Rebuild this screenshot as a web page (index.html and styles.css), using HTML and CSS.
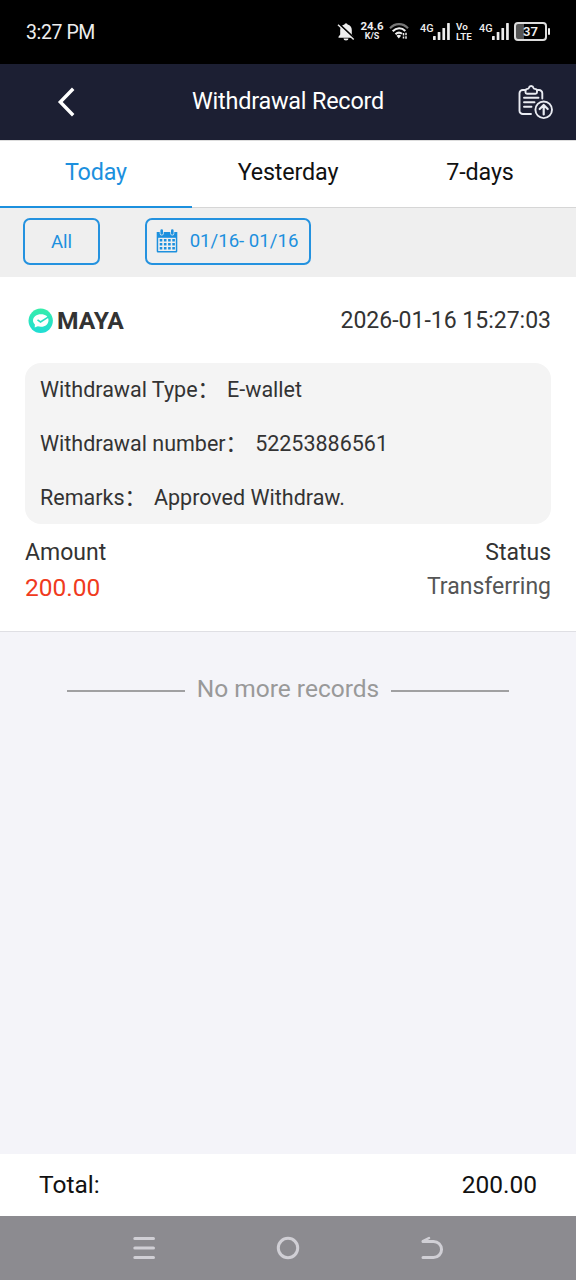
FILE: index.html
```html
<!DOCTYPE html>
<html lang="en">
<head>
<meta charset="utf-8">
<title>Withdrawal Record</title>
<link rel="stylesheet" href="styles.css">
</head>
<body>
<div class="statusbar">
  <span class="clock">3:27 PM</span>
  <div class="indicators">
    <svg class="bell" width="18" height="20" viewBox="0 0 18 20"><path d="M9 1.200a1.700 1.700 0 0 1 1.600 1.400C13.300 3.300 14.800 5.300 14.800 8v4.500l1.700 2.200v1H1.500v-1l1.700-2.200V8C3.200 5.300 4.700 3.300 7.400 2.600A1.700 1.700 0 0 1 9 1.200zM6.500 16.500h5a2.500 2 0 0 1-5 0z" fill="#eee"/><path d="M2 2l15 14" stroke="#000" stroke-width="2"/><path d="M1 2.700l15.700 14.800" stroke="#eee" stroke-width="1.400"/></svg>
    <div class="speed"><span class="speed-num">24.6</span><span class="speed-unit">K/S</span></div>
    <svg class="wifi" width="20" height="18" viewBox="0 0 20 18" fill="none" stroke-width="2.100"><path d="M1 6.200C6 .700 14 .700 19 6.200" stroke="#777"/><path d="M3.700 9.300c3.700-4 9-4 12.600-.3M6.500 12.300c2-2 4.600-2.100 6.500-.5" stroke="#eee"/><path d="M7.500 13.700q2.300-1.800 4.600 0L9.800 16.500z" fill="#eee"/><path d="M14.500 11v5.500M17 10.800v6" stroke="#eee" stroke-width="1.500" stroke-dasharray="2.500 1"/></svg>
    <div class="signal"><span class="gen">4G</span><svg width="17" height="18" viewBox="0 0 17 18" fill="#eee"><rect x="0" y="14" width="2.700" height="4" rx=".6"/><rect x="4.700" y="10" width="2.700" height="8" rx=".6"/><rect x="9.400" y="6" width="2.700" height="12" rx=".6"/><rect x="14.100" y="1" width="2.700" height="17" rx=".6"/></svg></div>
    <div class="volte"><span>Vo</span><span>LTE</span></div>
    <div class="signal"><span class="gen">4G</span><svg width="17" height="18" viewBox="0 0 17 18" fill="#eee"><rect x="0" y="14" width="2.700" height="4" rx=".6"/><rect x="4.700" y="10" width="2.700" height="8" rx=".6"/><rect x="9.400" y="6" width="2.700" height="12" rx=".6"/><rect x="14.100" y="1" width="2.700" height="17" rx=".6"/></svg></div>
    <div class="battery"><span class="battery-body">37</span><span class="battery-tip"></span></div>
  </div>
</div>

<header class="header">
  <svg class="back" width="20" height="32" viewBox="0 0 20 32"><path d="M17.200 2.800L4.300 16l12.900 13.200" fill="none" stroke="#fff" stroke-width="3.400"/></svg>
  <h1 class="title">Withdrawal Record</h1>
  <svg class="upload" width="36" height="36" viewBox="0 0 36 36" fill="none" stroke="#e9ebf2" stroke-width="1.900" stroke-linecap="round" stroke-linejoin="round"><path d="M8.500 6H5.800A3.300 3.300 0 0 0 2.500 9.300v17.400A3.300 3.300 0 0 0 5.800 30H14M20 6h2a3.300 3.300 0 0 1 3.300 3.300V14.500"/><path d="M8.500 8.300V6.700q0-1.800 2.200-1.800c.8 0 1-.400 1.200-1.100a2.300 2.300 0 0 1 4.500 0c.2.700.4 1.100 1.200 1.100q2.400 0 2.400 1.800v1.600q0 1.500-1.500 1.500H10q-1.500 0-1.500-1.500z"/><path d="M7 13.800h14.500M7 18.300h10.500M7 22.800h7.500"/><circle cx="26.700" cy="25.800" r="8.300"/><path d="M26.700 30.500v-9M22.700 25l4-4 4 4" stroke-width="2.200"/></svg>
</header>

<nav class="tabs">
  <div class="tab active">Today</div>
  <div class="tab">Yesterday</div>
  <div class="tab">7-days</div>
</nav>

<div class="filters">
  <div class="chip all">All</div>
  <div class="chip date">
    <svg width="22" height="24" viewBox="0 0 22 24"><path d="M.7 3h3v1.500a2 2 0 0 0 4 0V3h6.600v1.500a2 2 0 0 0 4 0V3h3v19.300q0 1.200-1.200 1.200H1.900Q.7 23.500.7 22.300z" fill="#1c90de"/><rect x="2.200" y="8.800" width="17.600" height="13.200" fill="#efefef"/><path d="M5.700 1.500v3M16.300 1.500v3" stroke="#1c90de" stroke-width="2.600" stroke-linecap="round"/><path d="M3.700 11.300h15.200M3.700 15.300h15.200M3.700 19.300h15.200" stroke="#1c90de" stroke-width="2.500" stroke-dasharray="2.600 1.600"/></svg>
    <span>01/16- 01/16</span>
  </div>
</div>

<main class="content">
  <article class="record">
    <div class="record-head">
      <div class="wallet">
        <svg width="26" height="26" viewBox="0 0 26 26"><defs><linearGradient id="mint" x1="0" y1="0" x2="0" y2="1"><stop offset="0" stop-color="#36edaa"/><stop offset="1" stop-color="#20ddd5"/></linearGradient></defs><circle cx="12.700" cy="12.800" r="12.200" fill="url(#mint)"/><path d="M13 6.200c4.500 0 7.500 2.200 7.500 6s-3 6.500-7.500 6.500c-1.200 0-2.300-.2-3.200-.5L6.700 19.600l.2-3C5.600 15.400 5 14.100 5 12.600c0-3.800 3.500-6.400 8-6.400z" fill="#fff"/><path d="M9.500 11.800l3 2.200 8-5.200" fill="none" stroke="#27dfc1" stroke-width="1.600"/></svg>
        <strong>MAYA</strong>
      </div>
      <time>2026-01-16 15:27:03</time>
    </div>
    <dl class="details">
      <div class="row"><dt>Withdrawal Type：</dt><dd>E-wallet</dd></div>
      <div class="row"><dt>Withdrawal number：</dt><dd>52253886561</dd></div>
      <div class="row"><dt>Remarks：</dt><dd>Approved Withdraw.</dd></div>
    </dl>
    <div class="summary">
      <div class="sum-col"><span>Amount</span><span class="amount">200.00</span></div>
      <div class="sum-col right"><span>Status</span><span class="state">Transferring</span></div>
    </div>
  </article>
  <div class="end"><span class="rule"></span><span>No more records</span><span class="rule"></span></div>
</main>

<footer class="total"><span>Total:</span><span>200.00</span></footer>

<div class="sysnav">
  <svg width="24" height="26" viewBox="0 0 24 26"><path d="M2.800 3.500h18.700M2.800 13h18.700M2.800 22.500h18.700" stroke="#d0cfd5" stroke-width="3" stroke-linecap="round"/></svg>
  <svg width="26" height="26" viewBox="0 0 26 26"><circle cx="13" cy="13" r="9.700" fill="none" stroke="#d0cfd5" stroke-width="3"/></svg>
  <svg width="24" height="26" viewBox="0 0 24 26"><path d="M3 6.400h10.500a8 8 0 0 1 0 16.100H3" fill="none" stroke="#d0cfd5" stroke-width="3" stroke-linecap="round"/><path d="M3 6.200L9 3" stroke="#d0cfd5" stroke-width="2.500" stroke-linecap="round"/></svg>
</div>
</body>
</html>
```

FILE: styles.css
```css
* { box-sizing: border-box; }

body {
  margin: 0;
  width: 576px;
  height: 1280px;
  display: flex;
  flex-direction: column;
  overflow: hidden;
  font-family: Roboto, "Noto Sans CJK SC", sans-serif;
  font-size: 23px;
  color: #333;
  white-space: nowrap;
}

svg { display: block; flex: none; }

.statusbar {
  height: 64px;
  flex: none;
  background: #000;
  color: #eee;
  display: flex;
  justify-content: space-between;
  padding: 0 26px;
}
.clock { font-size: 19.5px; letter-spacing: -.4px; line-height: 66px; }
.indicators { display: flex; align-items: flex-start; padding-top: 22px; }
.speed {
  width: 24px;
  margin-left: 5px;
  margin-top: -1px;
  display: flex;
  flex-direction: column;
  align-items: center;
  font-weight: 700;
}
.speed-num { font-size: 11.5px; line-height: 11px; }
.speed-unit { font-size: 9px; line-height: 8px; }
.wifi { margin-left: 5px; }
.signal { display: flex; margin-left: 11px; }
.gen { width: 13px; font-size: 10.8px; line-height: 13px; font-weight: 500; }
.volte {
  width: 17px;
  margin-left: 6px;
  font-size: 9.800px;
  line-height: 10px;
  font-weight: 600;
  display: flex;
  flex-direction: column;
}
.volte + .signal { margin-left: 6px; }
.battery { display: flex; align-items: center; gap: 1px; margin-left: 5px; }
.battery-body {
  width: 33px;
  height: 19px;
  border: 2px solid #ddd;
  border-radius: 4px;
  background: linear-gradient(90deg, #555 8px, #000 8px);
  font-size: 13px;
  line-height: 16px;
  font-weight: 600;
  text-align: center;
}
.battery-tip { width: 2px; height: 7px; border-radius: 1px; background: #eee; }

.header {
  height: 76px;
  flex: none;
  background: #1c1f33;
  display: grid;
  grid-template-columns: 1fr auto 1fr;
  align-items: center;
  padding: 0 23px 0 56px;
}
.title {
  margin: 0 33px 3px 0;
  font-size: 23.400px;
  letter-spacing: -.2px;
  font-weight: 400;
  color: #fff;
}
.back { margin-top: -1px; }
.upload { justify-self: end; }

.tabs {
  height: 68px;
  flex: none;
  display: flex;
  background: #fff;
  border-top: 1px solid #ddd;
}
.tab {
  flex: 1;
  text-align: center;
  line-height: 62px;
  font-size: 23.300px;
  letter-spacing: -.15px;
  color: #111;
  border-bottom: 1px solid #d6d6d6;
}
.tab.active { color: #1c90de; border-bottom: 2px solid #1c90de; }

.filters {
  height: 69px;
  flex: none;
  display: flex;
  align-items: flex-start;
  padding: 10px 23px;
  gap: 45px;
  background: #efefef;
}
.chip {
  height: 47px;
  border: 2px solid #2492df;
  border-radius: 7px;
  display: flex;
  align-items: center;
  justify-content: center;
  font-size: 18.600px;
  color: #1c90de;
}
.all { width: 77px; }
.date { width: 166px; gap: 12px; padding: 0 2px 1px 0; }

.content { flex: 1; background: #f4f4f9; }
.record {
  height: 355px;
  background: #fff;
  border-bottom: 1px solid #dfdfe4;
  padding: 29px 25px 0;
}
.record-head { display: flex; justify-content: space-between; height: 57px; line-height: 29px; }
.wallet { display: flex; gap: 3px; padding: 2px 0 0 3px; }
.wallet strong { font-size: 24.600px; line-height: 26px; }
.details {
  margin: 0;
  height: 161px;
  padding: 0 15px;
  background: #f4f4f4;
  border-radius: 16px;
  font-size: 21.500px;
}
.row { height: 53.800px; display: flex; line-height: 53px; }
.row dd { margin: 0 0 0 8px; }
.summary { display: flex; justify-content: space-between; padding-top: 12px; }
.sum-col { display: flex; flex-direction: column; line-height: 34px; }
.right { text-align: right; }
.amount { font-size: 24.500px; line-height: 36px; color: #f03a20; }
.state { color: #555; }
.end {
  display: flex;
  justify-content: center;
  align-items: center;
  gap: 12px;
  padding-top: 42px;
  font-size: 24.500px;
  line-height: 30px;
  color: #999;
}
.rule { width: 118px; height: 2px; margin-top: 3px; background: #a0a0a2; }

.total {
  height: 62px;
  flex: none;
  background: #fff;
  display: flex;
  justify-content: space-between;
  padding: 0 39px;
  font-size: 24.500px;
  line-height: 62px;
  color: #111;
}
.sysnav {
  height: 64px;
  flex: none;
  background: #8c8b90;
  display: grid;
  grid-template-columns: repeat(3, 144px);
  justify-content: center;
  justify-items: center;
  align-items: center;
}
```
